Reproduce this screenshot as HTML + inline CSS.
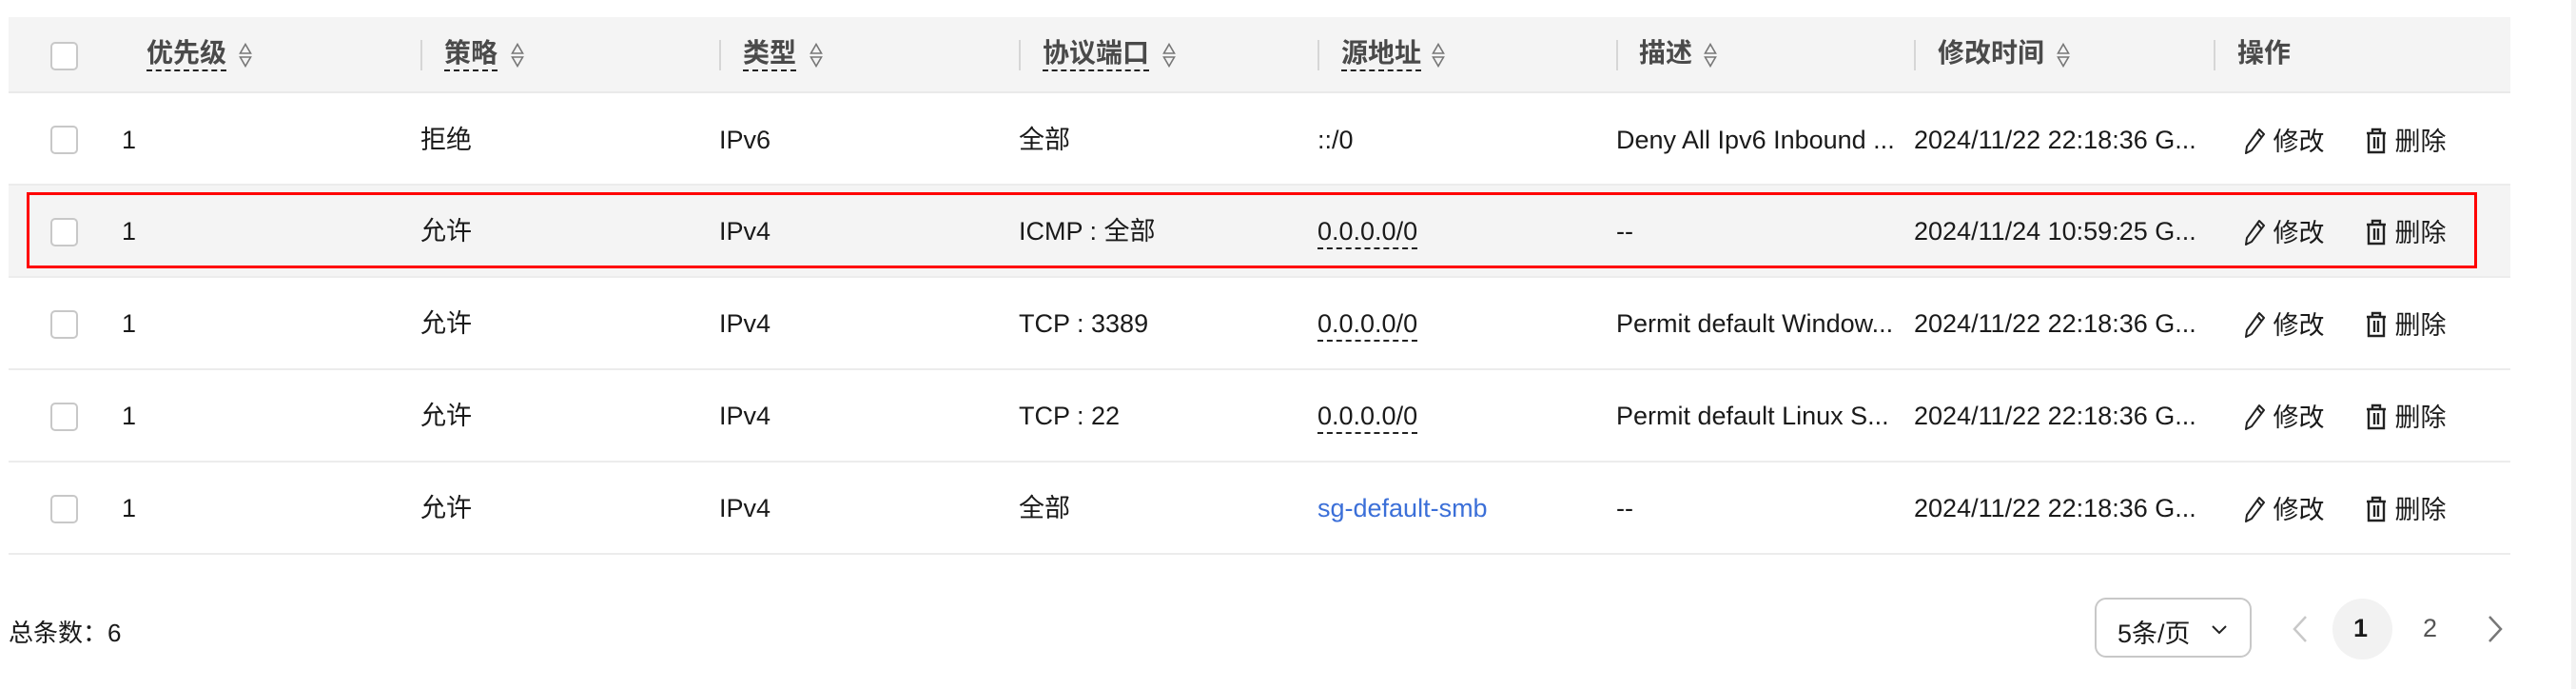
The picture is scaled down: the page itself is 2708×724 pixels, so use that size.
<!DOCTYPE html>
<html><head><meta charset="utf-8"><style>
*{margin:0;padding:0;box-sizing:border-box}
body{width:2708px;height:724px;background:#fff;position:relative;overflow:hidden;font-family:"Liberation Sans","Noto Sans CJK SC",sans-serif;font-size:27px;color:#1a1a1a}
.abs{position:absolute;white-space:nowrap}
.hdr{position:absolute;left:9px;top:18px;width:2630px;height:80px;background:#f4f4f4;border-bottom:2px solid #eaeaea}
.row{position:absolute;left:9px;width:2630px;height:97px;border-bottom:2px solid #ececec}
.cb{position:absolute;width:29px;height:30px;border:2px solid #c8c8c8;border-radius:5px;background:#fff}
.ht{font-weight:bold;color:#4a4a4a;font-size:28px}
.du{border-bottom:2px dashed #222;padding-bottom:2px}
.div{position:absolute;top:42px;width:2px;height:32px;background:#d6d6d6}
.cell{position:absolute;white-space:nowrap;line-height:30px}
</style></head><body>
<div class="hdr"></div>
<div class="row" style="top:98px"></div>
<div class="row" style="top:195px;background:#f4f4f4"></div>
<div class="row" style="top:292px"></div>
<div class="row" style="top:389px"></div>
<div class="row" style="top:486px"></div>
<div class="abs" style="left:28px;top:202px;width:2576px;height:80px;border:3px solid #ff0000"></div>
<div style="position:absolute;right:0;top:0;width:5px;height:724px;background:#f2f2f2"></div>

<div class="cb" style="left:53px;top:44px"></div>
<div class="div" style="left:442px"></div><div class="div" style="left:756px"></div><div class="div" style="left:1071px"></div><div class="div" style="left:1385px"></div><div class="div" style="left:1699px"></div><div class="div" style="left:2012px"></div><div class="div" style="left:2327px"></div>
<svg width="0" height="0" style="position:absolute"><defs><symbol id="s" viewBox="0 0 14 26"><path d="M7 1.5 L12.5 11 H1.5 Z M7 24.5 L12.5 15 H1.5 Z" fill="none" stroke="#777" stroke-width="1.6"/></symbol>
<symbol id="pen" viewBox="0 0 24 28"><path d="M17 2 L22 7 L9 24 L3 27 L4 20 Z M15 5 L19 10" fill="none" stroke="#222" stroke-width="2" stroke-linejoin="round"/></symbol>
<symbol id="bin" viewBox="0 0 24 28"><path d="M2 6 H22 M8 6 V2 H16 V6 M4 6 V26 H20 V6 M10 10 V22 M14 10 V22" fill="none" stroke="#222" stroke-width="2.4"/></symbol></defs></svg>

<div class="cell ht" style="left:154px;top:41px"><span class="du">优先级</span></div><svg class="abs" style="left:251px;top:45px" width="14" height="26"><use href="#s"/></svg>
<div class="cell ht" style="left:467px;top:41px"><span class="du">策略</span></div><svg class="abs" style="left:537px;top:45px" width="14" height="26"><use href="#s"/></svg>
<div class="cell ht" style="left:781px;top:41px"><span class="du">类型</span></div><svg class="abs" style="left:851px;top:45px" width="14" height="26"><use href="#s"/></svg>
<div class="cell ht" style="left:1096px;top:41px"><span class="du">协议端口</span></div><svg class="abs" style="left:1222px;top:45px" width="14" height="26"><use href="#s"/></svg>
<div class="cell ht" style="left:1410px;top:41px"><span class="du">源地址</span></div><svg class="abs" style="left:1505px;top:45px" width="14" height="26"><use href="#s"/></svg>
<div class="cell ht" style="left:1723px;top:41px">描述</div><svg class="abs" style="left:1791px;top:45px" width="14" height="26"><use href="#s"/></svg>
<div class="cell ht" style="left:2037px;top:41px">修改时间</div><svg class="abs" style="left:2162px;top:45px" width="14" height="26"><use href="#s"/></svg>
<div class="cell ht" style="left:2352px;top:41px">操作</div>

<div class="cb" style="left:53px;top:132px"></div>
<div class="cell" style="left:128px;top:132px">1</div><div class="cell" style="left:442px;top:132px">拒绝</div><div class="cell" style="left:756px;top:132px">IPv6</div><div class="cell" style="left:1071px;top:132px">全部</div><div class="cell" style="left:1385px;top:132px">::/0</div><div class="cell" style="left:1699px;top:132px">Deny All Ipv6 Inbound ...</div><div class="cell" style="left:2012px;top:132px">2024/11/22 22:18:36 G...</div>

<div class="cb" style="left:53px;top:229px"></div>
<div class="cell" style="left:128px;top:228px">1</div><div class="cell" style="left:442px;top:228px">允许</div><div class="cell" style="left:756px;top:228px">IPv4</div><div class="cell" style="left:1071px;top:228px">ICMP : 全部</div><div class="cell" style="left:1385px;top:228px"><span class="du">0.0.0.0/0</span></div><div class="cell" style="left:1699px;top:228px">--</div><div class="cell" style="left:2012px;top:228px">2024/11/24 10:59:25 G...</div>

<div class="cb" style="left:53px;top:326px"></div>
<div class="cell" style="left:128px;top:325px">1</div><div class="cell" style="left:442px;top:325px">允许</div><div class="cell" style="left:756px;top:325px">IPv4</div><div class="cell" style="left:1071px;top:325px">TCP : 3389</div><div class="cell" style="left:1385px;top:325px"><span class="du">0.0.0.0/0</span></div><div class="cell" style="left:1699px;top:325px">Permit default Window...</div><div class="cell" style="left:2012px;top:325px">2024/11/22 22:18:36 G...</div>

<div class="cb" style="left:53px;top:423px"></div>
<div class="cell" style="left:128px;top:422px">1</div><div class="cell" style="left:442px;top:422px">允许</div><div class="cell" style="left:756px;top:422px">IPv4</div><div class="cell" style="left:1071px;top:422px">TCP : 22</div><div class="cell" style="left:1385px;top:422px"><span class="du">0.0.0.0/0</span></div><div class="cell" style="left:1699px;top:422px">Permit default Linux S...</div><div class="cell" style="left:2012px;top:422px">2024/11/22 22:18:36 G...</div>

<div class="cb" style="left:53px;top:520px"></div>
<div class="cell" style="left:128px;top:519px">1</div><div class="cell" style="left:442px;top:519px">允许</div><div class="cell" style="left:756px;top:519px">IPv4</div><div class="cell" style="left:1071px;top:519px">全部</div><div class="cell" style="left:1385px;top:519px;color:#3b6fd8">sg-default-smb</div><div class="cell" style="left:1699px;top:519px">--</div><div class="cell" style="left:2012px;top:519px">2024/11/22 22:18:36 G...</div>

<div class="abs" style="left:2358px;top:127px"><svg width="24" height="28" style="vertical-align:-4px"><use href="#pen"/></svg> 修改</div><div class="abs" style="left:2486px;top:127px"><svg width="24" height="28" style="vertical-align:-4px"><use href="#bin"/></svg> 删除</div>
<div class="abs" style="left:2358px;top:223px"><svg width="24" height="28" style="vertical-align:-4px"><use href="#pen"/></svg> 修改</div><div class="abs" style="left:2486px;top:223px"><svg width="24" height="28" style="vertical-align:-4px"><use href="#bin"/></svg> 删除</div>
<div class="abs" style="left:2358px;top:320px"><svg width="24" height="28" style="vertical-align:-4px"><use href="#pen"/></svg> 修改</div><div class="abs" style="left:2486px;top:320px"><svg width="24" height="28" style="vertical-align:-4px"><use href="#bin"/></svg> 删除</div>
<div class="abs" style="left:2358px;top:417px"><svg width="24" height="28" style="vertical-align:-4px"><use href="#pen"/></svg> 修改</div><div class="abs" style="left:2486px;top:417px"><svg width="24" height="28" style="vertical-align:-4px"><use href="#bin"/></svg> 删除</div>
<div class="abs" style="left:2358px;top:514px"><svg width="24" height="28" style="vertical-align:-4px"><use href="#pen"/></svg> 修改</div><div class="abs" style="left:2486px;top:514px"><svg width="24" height="28" style="vertical-align:-4px"><use href="#bin"/></svg> 删除</div>

<div class="abs" style="left:9px;top:645px;font-size:26px">总条数：6</div>
<div class="abs" style="left:2202px;top:628px;width:165px;height:63px;border:2px solid #c8c8c8;border-radius:12px;background:#fff"></div>
<div class="abs" style="left:2226px;top:644px;font-size:27px">5条/页</div>
<svg class="abs" style="left:2324px;top:656px" width="18" height="12"><path d="M2 2 L9 9 L16 2" fill="none" stroke="#222" stroke-width="2"/></svg>
<svg class="abs" style="left:2409px;top:646px" width="18" height="30"><path d="M15 2 L3 15 L15 28" fill="none" stroke="#c8c8c8" stroke-width="2.5"/></svg>
<div class="abs" style="left:2452px;top:629px;width:63px;height:64px;border-radius:50%;background:#f2f2f2"></div>
<div class="abs" style="left:2474px;top:645px;font-weight:bold;font-size:27px">1</div>
<div class="abs" style="left:2547px;top:645px;font-size:27px;color:#555">2</div>
<svg class="abs" style="left:2614px;top:646px" width="18" height="30"><path d="M3 2 L15 15 L3 28" fill="none" stroke="#777" stroke-width="2.5"/></svg>
</body></html>
